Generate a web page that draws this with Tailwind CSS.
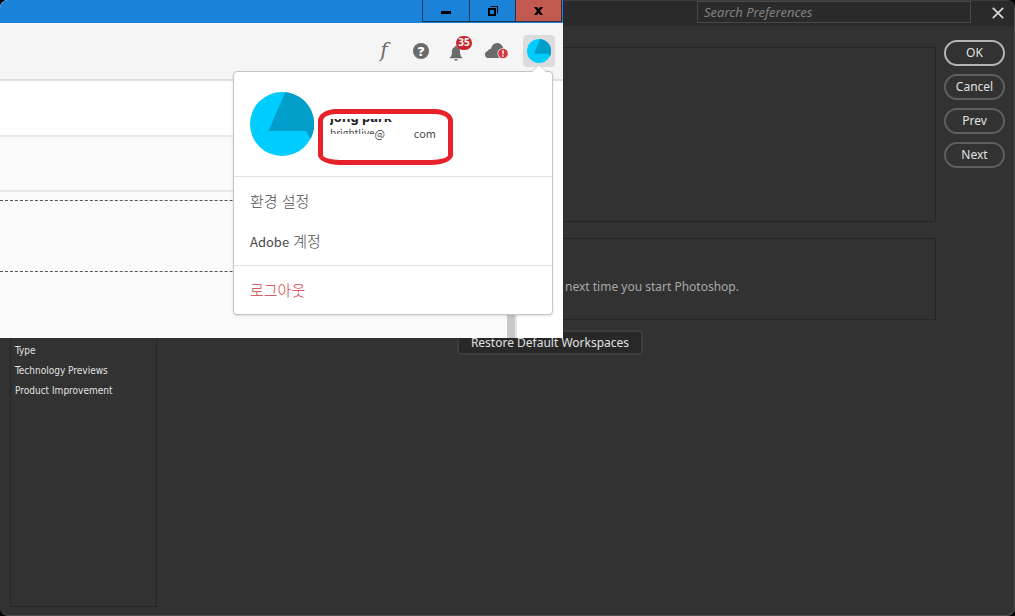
<!DOCTYPE html>
<html lang="ko">
<head>
<meta charset="utf-8">
<meta name="viewport" content="width=device-width, initial-scale=1">
<title>Preferences</title>
<script src="https://cdn.jsdelivr.net/npm/@tailwindcss/browser@4"></script>
</head>
<body class="bg-black font-['Noto_Sans','Noto_Sans_CJK_KR',sans-serif] text-xs text-[#e0e0e0]">
<div class="relative flex min-h-screen flex-col overflow-hidden rounded-lg border-r border-b border-[#4c4c4c] bg-[#323232]">

  <!-- Preferences dialog -->
  <header class="flex h-[26px] items-start justify-end border-t border-[#3c3c3c] bg-[#2a2a2a]">
    <input type="search" aria-label="Search Preferences" placeholder="Search Preferences" class="h-[22px] w-[274px] border border-[#484848] bg-[#2a2a2a] px-[6px] text-[13px] italic placeholder:text-[#808080]">
    <button type="button" aria-label="Close" class="ml-[21px] mr-[10px] mt-[6px]">
      <svg class="size-3" viewBox="0 0 12 12" fill="none" stroke="#d8d8d8" stroke-width="1.7"><path d="M.8.8l10.400 10.400M11.200.8L.8 11.200"/></svg>
    </button>
  </header>

  <div class="flex flex-1 pb-2 pl-[10px] pr-[9px]">
    <nav class="mt-[21px] w-[147px] shrink-0 border border-[#262626] pl-1 pt-[293px] font-['DejaVu_Sans_Condensed','DejaVu_Sans',sans-serif] text-[10px] leading-5">
      <a href="#type" class="block">Type</a>
      <a href="#technology" class="block">Technology Previews</a>
      <a href="#product" class="block">Product Improvement</a>
    </nav>

    <main class="ml-[7px] flex-1 pt-[21px]">
      <section class="h-[175px] border border-[#262626]"></section>
      <section class="mt-4 flex h-[82px] items-center border border-[#262626] pl-[400px] pt-4 text-[#a8a8a8]">
        <p>next time you start Photoshop.</p>
      </section>
      <div class="mt-[10px] flex justify-center">
        <button type="button" class="h-[25px] rounded-sm border-2 border-[#3c3c3c] bg-[#282828] px-3">Restore Default Workspaces</button>
      </div>
    </main>

    <div class="ml-2 flex w-[61px] flex-col gap-2 pt-[14px]">
      <button type="button" class="h-[26px] rounded-full border-2 border-[#b4b4b4]">OK</button>
      <button type="button" class="h-[26px] rounded-full border-2 border-[#5e5e5e]">Cancel</button>
      <button type="button" class="h-[26px] rounded-full border-2 border-[#5e5e5e]">Prev</button>
      <button type="button" class="h-[26px] rounded-full border-2 border-[#5e5e5e]">Next</button>
    </div>
  </div>

  <!-- Creative Cloud window, lying over the dialog -->
  <div class="absolute left-0 top-0 flex h-[338px] w-[563px] flex-col bg-white text-[#4b4b4b]">
    <div class="flex h-[23px] justify-end bg-[#1a83d9] pb-px pr-px">
      <button type="button" aria-label="Minimize" class="flex w-[47px] items-center justify-center border-b border-l border-[#17354f]">
        <svg class="mt-1 h-[3px] w-[10px]" viewBox="0 0 10 3"><path d="M0 0h10v3H0z"/></svg>
      </button>
      <button type="button" aria-label="Restore" class="flex w-[46px] items-center justify-center border-b border-l border-[#17354f]">
        <svg class="size-[10px]" viewBox="0 0 10 10" fill="none" stroke="#000"><path d="M1 3h6v6H1z" stroke-width="2"/><path d="M2.500.5h7v7"/></svg>
      </button>
      <button type="button" aria-label="Close window" class="flex w-[47px] items-center justify-center border-x border-b border-[#3d2b35] bg-[#c25a52]">
        <svg class="h-2 w-[9px]" viewBox="0 0 9 8"><path d="M0 0h3l1.500 2L6 0h3L6 4l3 4H6L4.500 6 3 8H0l3-4z"/></svg>
      </button>
    </div>

    <div class="flex h-[58px] items-center justify-end border-b-2 border-[#dfdfdf] bg-[#f5f5f5] pr-2">
      <button type="button" aria-label="Fonts" class="mr-[22px] w-[14px] pb-[2px] text-center font-['DejaVu_Serif',serif] text-[20px] italic leading-6 text-[#6b6b6b]">f</button>
      <button type="button" aria-label="Help" class="mr-5 flex size-4 items-center justify-center rounded-full bg-[#6b6b6b] font-['Open_Sans',sans-serif] text-[13px] font-extrabold leading-4 text-white">?</button>
      <button type="button" aria-label="Notifications" class="relative mr-[22px]">
        <svg class="mt-1 h-[15px] w-[14px]" viewBox="0 0 14 17" fill="#6b6b6b"><path d="M7 0c-1 0-1.500.6-1.500 1.400C3.300 2 2.400 3.800 2.400 6.200c0 4-.7 5.300-2.400 6.800V14h14v-1c-1.700-1.500-2.400-2.800-2.400-6.800 0-2.400-.9-4.200-3.100-4.800C8.500.6 8 0 7 0zM5 15c.2 1.200 1 1.700 2 1.700s1.800-.5 2-1.700z"/></svg>
        <span class="absolute -top-[6px] left-[7px] flex h-[14px] w-4 items-center justify-center rounded-full bg-[#c9252d] text-[10px] font-bold text-white">35</span>
      </button>
      <button type="button" aria-label="Cloud status" class="mr-[15px]">
        <svg class="h-4 w-[23px]" viewBox="0 0 23 16"><path fill="#6b6b6b" d="M3.700 15A3.700 3.700 0 0 1 0 11.400c0-1.800 1.300-3.100 3-3.300C3.200 6.400 4.500 5.500 6 5.700 6.800 2.200 9 0 12 0c3.300 0 6 2.600 6.200 5.600 1 .3 1.800 1 1.800 2V15z"/><circle cx="18" cy="10.500" r="5.500" fill="#f5f5f5"/><circle cx="18" cy="10.500" r="4.800" fill="#d7373f"/><path fill="#fff" d="M17.200 7.300h1.600l-.2 4h-1.200zM17.200 12.200h1.600v1.500h-1.600z"/></svg>
      </button>
      <button type="button" aria-label="Account" class="flex size-8 items-center justify-center rounded bg-[#dcdcdc]">
        <svg class="size-6" viewBox="0 0 64 64"><circle cx="32" cy="32" r="32" fill="#00cdff"/><path fill="#009ec9" d="M35.200.2 18.500 39H56l4.500 8A32 32 0 0 0 35.200.2z"/></svg>
      </button>
    </div>

    <div class="flex flex-1">
      <div class="flex flex-1 flex-col bg-[#fafafa]">
        <div class="h-14 border-b-2 border-[#e8e8e8] bg-white"></div>
        <div class="h-[55px] border-b-2 border-[#e8e8e8]"></div>
        <div class="mt-2 h-[72px] border-y border-dashed border-[#555]"></div>
      </div>
      <div class="w-[10px] border-r-2 border-[#e8e8e8] bg-[#c8c8c8]"></div>
      <div class="w-[46px]"></div>
    </div>

    <!-- Account menu -->
    <div class="absolute right-[10px] top-[71px] w-80 rounded border border-[#c6c6c6] bg-white text-[15px] shadow-sm">
      <svg class="absolute -top-2 right-[5px] h-[9px] w-4" viewBox="0 0 16 9"><path d="M0 9 8 1l8 8z" fill="#fff"/><path d="M0 8.500 8 .7l8 7.800" fill="none" stroke="#c6c6c6" stroke-width=".8"/></svg>
      <div class="flex h-[105px] items-center border-b border-[#e0e0e0] pl-4">
        <svg class="size-16" viewBox="0 0 64 64"><circle cx="32" cy="32" r="32" fill="#00cdff"/><path fill="#009ec9" d="M35.200.2 18.500 39H56l4.500 8A32 32 0 0 0 35.200.2z"/></svg>
        <div class="ml-1 mt-[26px] h-14 w-[135px] rounded-[18px_18px_22px_22px/12px_12px_10px_10px] border-[5px] border-[#e6212a] pl-[7px] pt-[5px]">
          <div class="flex h-[6px] items-end overflow-hidden text-[13px] font-bold leading-4 text-[#222]"><span>jong park</span></div>
          <div class="flex h-4 items-start font-['Noto_Sans_CJK_KR',sans-serif] text-[11px] leading-4">
            <span class="h-[9px] overflow-hidden text-[10px]">brightlive</span><span>@</span><span class="ml-auto mr-3">com</span>
          </div>
        </div>
      </div>
      <div class="border-b border-[#e0e0e0] py-1 font-['Noto_Sans_CJK_KR',sans-serif]">
        <a href="#preferences" class="flex h-10 items-center px-4 font-light">환경 설정</a>
        <a href="#account" class="flex h-10 items-center px-4"><span><span class="text-[13px]">Adobe</span> <span class="font-light">계정</span></span></a>
      </div>
      <a href="#logout" class="flex h-12 items-center px-4 font-['Noto_Sans_CJK_KR',sans-serif] font-light text-[#d03a45]">로그아웃</a>
    </div>
  </div>
</div>
</body>
</html>
